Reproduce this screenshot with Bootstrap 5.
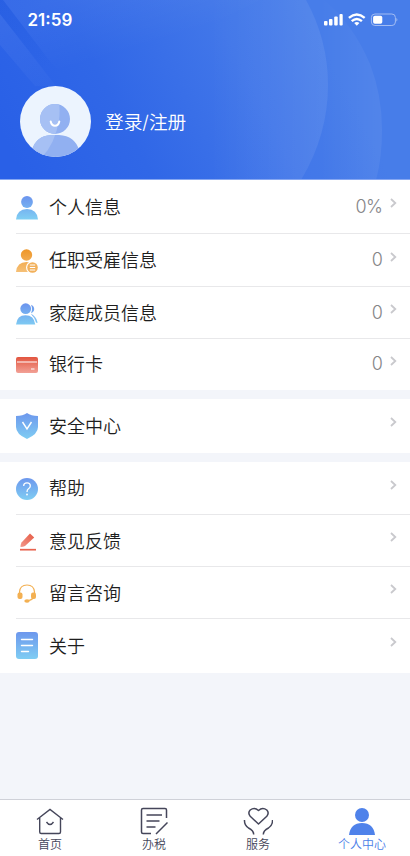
<!DOCTYPE html>
<html lang="zh-CN">
<head>
<meta charset="utf-8">
<meta name="viewport" content="width=device-width, initial-scale=1">
<title>个人中心</title>
<link href="https://cdn.jsdelivr.net/npm/bootstrap@5.3.0/dist/css/bootstrap.min.css" rel="stylesheet">
<style>
body{background:#f3f5fa;font-family:Inter,"Noto Sans CJK SC",sans-serif;color:#1e1e1e;height:856px;overflow:hidden}
svg{display:block;flex:none}
.hero{height:180px;background:#346be8;border-bottom:1px solid #86a7f2}
.status-bar{height:40px;padding:0 12px 0 27.5px}
.clock{font-size:17px;font-weight:600;line-height:40px}
.profile{padding:46px 20px 0;gap:14px}
.login-text{font-size:18.7px;line-height:26px;font-weight:350;padding-top:2px}
.group{margin-bottom:9px;background:#fff}
.entry{margin-left:16px;height:52px;border-bottom:1px solid #e8e8ea}
.entry:last-child{border-bottom-color:#fff}
.entry-body{padding-right:12.5px}
.h53{height:53px}.h54{height:54px}.h51{height:51px}
.icon-box{width:22px;margin-right:11px}
.drop-1{padding-top:2px}
.label-text{font-size:18px;line-height:26px;font-weight:350;padding-top:2px}
.value-text{font-size:18px;line-height:26px;color:#858587;font-weight:300;letter-spacing:-.8px;margin-right:7.500px}
.chev{margin-bottom:7px}
.tabs{height:57px;background:#fff;border-top:1px solid #cfd1d8}
.tab-item{font-size:12px;line-height:16px;color:#45465a;font-weight:350;padding-top:7px;width:104px;flex:none}
.tab-item:first-child{margin-left:-2px}
.tab-item.on{color:#4a7de8}
</style>
<script src="https://cdn.jsdelivr.net/npm/bootstrap@5.3.0/dist/js/bootstrap.bundle.min.js"></script>
</head>
<body class="d-flex flex-column">
<svg width="0" height="0" class="position-absolute"><defs>
<linearGradient id="blue" x1="0" y1="0" x2="0" y2="1"><stop stop-color="#6d97ed"/><stop offset="1" stop-color="#7fcdf3"/></linearGradient>
<linearGradient id="blueU" gradientUnits="userSpaceOnUse" x1="0" y1="0" x2="0" y2="24"><stop stop-color="#6b93ee"/><stop offset="1" stop-color="#80d0f3"/></linearGradient>
<linearGradient id="orangeU" gradientUnits="userSpaceOnUse" x1="0" y1="0" x2="0" y2="24"><stop stop-color="#ee9526"/><stop offset="1" stop-color="#f6c27a"/></linearGradient>
<linearGradient id="red" x1="0" y1="0" x2="0" y2="1"><stop stop-color="#e2553f"/><stop offset="1" stop-color="#f2a196"/></linearGradient>
<linearGradient id="redP" x1="1" y1="0" x2="0" y2="1"><stop stop-color="#e65a44"/><stop offset="1" stop-color="#f2988b"/></linearGradient>
</defs></svg>

<header class="hero position-relative text-white overflow-hidden">
<svg class="position-absolute top-0 start-0" width="410" height="180" viewBox="0 0 410 180"><defs>
<linearGradient id="bg" gradientUnits="userSpaceOnUse" x1="20" y1="170" x2="310" y2="20"><stop stop-color="#2960e7"/><stop offset=".35" stop-color="#3067e7"/><stop offset=".75" stop-color="#4277e9"/><stop offset="1" stop-color="#477de9"/></linearGradient>
<linearGradient id="arcA" gradientUnits="userSpaceOnUse" x1="210" y1="0" x2="328" y2="0"><stop stop-color="#fff" stop-opacity="0"/><stop offset="1" stop-color="#fff" stop-opacity=".08"/></linearGradient>
<linearGradient id="arcB" gradientUnits="userSpaceOnUse" x1="320" y1="0" x2="382" y2="0"><stop stop-color="#fff" stop-opacity="0"/><stop offset="1" stop-color="#fff" stop-opacity=".06"/></linearGradient>
<linearGradient id="top" gradientUnits="userSpaceOnUse" x1="60" y1="0" x2="80" y2="66"><stop stop-color="#fff" stop-opacity=".05"/><stop offset="1" stop-color="#fff" stop-opacity="0"/></linearGradient>
<linearGradient id="band" gradientUnits="userSpaceOnUse" x1="0" y1="10" x2="50" y2="85"><stop stop-color="#fff" stop-opacity=".06"/><stop offset="1" stop-color="#fff" stop-opacity=".02"/></linearGradient>
<linearGradient id="slit" gradientUnits="userSpaceOnUse" x1="0" y1="0" x2="50" y2="66"><stop stop-color="#1d55d8" stop-opacity=".25"/><stop offset="1" stop-color="#1d55d8" stop-opacity="0"/></linearGradient></defs>
<rect width="410" height="180" fill="url(#bg)"/>
<path d="M3 0H260L80 90L52 64z" fill="url(#top)"/>
<path d="M0 14L56 86H35L0 45z" fill="url(#band)"/>
<path d="M0 0H3L52 64L46 72L0 14z" fill="url(#slit)"/>
<path d="M200 0H306Q328 40 328 85Q328 135 301 180H200z" fill="url(#arcA)"/>
<path d="M324 0Q353 24 370 64Q382 95 382 130Q382 158 376 180H301Q328 135 328 85Q328 40 306 0z" fill="url(#arcB)"/>
</svg>
<div class="position-relative">
<div class="status-bar d-flex align-items-center justify-content-between">
<span class="clock">21:59</span>
<svg width="76" height="14" viewBox="0 0 76 14" fill="#fff">
<rect x="2" y="8" width="3.500" height="4.500" rx="1"/><rect x="7" y="6" width="3.500" height="6.500" rx="1"/><rect x="12.200" y="3.500" width="3.500" height="9" rx="1"/><rect x="17.500" y="1" width="3.200" height="11.500" rx="1"/>
<g fill="none" stroke="#fff" stroke-width="2.400"><path d="M26.900 4.900Q34.800-1.700 42.700 4.900"/><path d="M29.700 8.100Q34.800 3.700 39.900 8.100"/></g><path d="M32.200 10Q34.800 8 37.400 10L34.800 12.700z"/>
<rect x="49.400" y="1" width="24" height="11.500" rx="3.500" fill="none" stroke="#a2bcf3"/><rect x="51.100" y="2.800" width="9.200" height="8" rx="1.800"/><path d="M74.400 5Q76.400 6.700 74.400 8.500z" fill="#a2bcf3"/></svg>
</div>
<div class="profile d-flex align-items-center">
<svg width="71" height="71" viewBox="0 0 71 71"><defs><clipPath id="disc"><circle cx="35.500" cy="35.500" r="35.500"/></clipPath><clipPath id="figure"><circle cx="35" cy="33" r="15"/><path d="M12 71V64Q16 50 31 49H39Q55 50 59 64V71z"/></clipPath></defs>
<circle cx="35.500" cy="35.500" r="35.500" fill="#ecf4fe"/><g clip-path="url(#disc)"><g clip-path="url(#figure)"><path d="M0 0H71V71H0z" fill="#91b0f1"/><path d="M0 0H36Q41 20 39 34Q35 58 22 71H0z" fill="#a6c0f4"/></g></g><path d="M30.700 35.500Q31.500 39.700 35 39.700Q38.500 39.700 39.300 35.500" fill="none" stroke="#fff" stroke-width="2" stroke-linecap="round"/></svg>
<span class="login-text">登录/注册</span>
</div>
</div>
</header>

<main class="flex-grow-1">
<section class="group">
<div class="entry h54 d-flex align-items-center"><div class="icon-box drop-1"><svg width="22" height="24" viewBox="0 0 22 24" fill="url(#blueU)"><circle cx="11" cy="6" r="5.900"/><path d="M0 23.500Q1 13 11 13T22 23.500z"/></svg></div><div class="entry-body flex-grow-1 d-flex align-items-center"><span class="label-text me-auto">个人信息</span><span class="value-text">0%</span><svg class="chev" width="8" height="10" viewBox="0 0 8 10"><path d="M1 1L5.300 5L1 9" fill="none" stroke="#c9c9cd" stroke-width="1.800"/></svg></div></div>
<div class="entry h53 d-flex align-items-center"><div class="icon-box drop-1"><svg width="22" height="24" viewBox="0 0 22 24"><g fill="url(#orangeU)"><circle cx="10.500" cy="6" r="5.700"/><path d="M0 23Q1 13 10.500 13T21 23z"/></g><circle cx="16.500" cy="18.500" r="6.500" fill="#fff"/><circle cx="16.500" cy="18.500" r="5.300" fill="#f2b05a"/><path d="M13.800 16H19.200M13.800 18.500H19.200M13.800 21H19.200" stroke="#fff"/></svg></div><div class="entry-body flex-grow-1 d-flex align-items-center"><span class="label-text me-auto">任职受雇信息</span><span class="value-text">0</span><svg class="chev" width="8" height="10" viewBox="0 0 8 10"><path d="M1 1L5.300 5L1 9" fill="none" stroke="#c9c9cd" stroke-width="1.800"/></svg></div></div>
<div class="entry d-flex align-items-center"><div class="icon-box drop-1"><svg width="22" height="22" viewBox="0 0 22 22" fill="url(#blueU)"><circle cx="9.700" cy="5.700" r="5.400"/><path d="M0 21.500Q1 12.300 9.500 12.300T19.300 21.500z"/><path d="M15 1.800Q18.200 3.200 18.200 6Q18.200 9 15 10.200Q17 6 15 1.800z"/><path d="M15.500 11.300Q20.300 14 21.300 19.500H20.300Q19 14.500 15.500 11.300z" stroke="url(#blueU)" stroke-width=".5"/></svg></div><div class="entry-body flex-grow-1 d-flex align-items-center"><span class="label-text me-auto">家庭成员信息</span><span class="value-text">0</span><svg class="chev" width="8" height="10" viewBox="0 0 8 10"><path d="M1 1L5.300 5L1 9" fill="none" stroke="#c9c9cd" stroke-width="1.800"/></svg></div></div>
<div class="entry h51 d-flex align-items-center"><div class="icon-box drop-1"><svg width="22" height="16" viewBox="0 0 22 16"><rect width="22" height="16" rx="2" fill="url(#red)"/><path d="M1 5H21M15 12H18.500" stroke="#fff" stroke-width="1.200"/></svg></div><div class="entry-body flex-grow-1 d-flex align-items-center"><span class="label-text me-auto">银行卡</span><span class="value-text">0</span><svg class="chev" width="8" height="10" viewBox="0 0 8 10"><path d="M1 1L5.300 5L1 9" fill="none" stroke="#c9c9cd" stroke-width="1.800"/></svg></div></div>
</section>
<section class="group">
<div class="entry h54 d-flex align-items-center"><div class="icon-box"><svg width="22" height="26" viewBox="0 0 22 26"><path d="M11 0Q15 3 22 3V14Q22 21 11 26Q0 21 0 14V3Q7 3 11 0z" fill="url(#blue)"/><path d="M6.500 9L11 16L15.500 9" fill="none" stroke="#fff" stroke-width="1.400"/></svg></div><div class="entry-body flex-grow-1 d-flex align-items-center"><span class="label-text me-auto">安全中心</span><svg class="chev" width="8" height="10" viewBox="0 0 8 10"><path d="M1 1L5.300 5L1 9" fill="none" stroke="#c9c9cd" stroke-width="1.800"/></svg></div></div>
</section>
<section class="group">
<div class="entry h53 d-flex align-items-center"><div class="icon-box drop-1"><svg width="22" height="22" viewBox="0 0 22 22"><circle cx="11" cy="11" r="11" fill="url(#blue)"/><path d="M7.700 8Q7.700 4.900 11 4.900Q14.300 4.900 14.300 8Q14.300 9.700 12.500 10.700Q11 11.600 11 14" fill="none" stroke="#fff" stroke-width="1.300"/><circle cx="11" cy="16.500" r=".9" fill="#fff"/></svg></div><div class="entry-body flex-grow-1 d-flex align-items-center"><span class="label-text me-auto">帮助</span><svg class="chev" width="8" height="10" viewBox="0 0 8 10"><path d="M1 1L5.300 5L1 9" fill="none" stroke="#c9c9cd" stroke-width="1.800"/></svg></div></div>
<div class="entry d-flex align-items-center"><div class="icon-box drop-1"><svg width="22" height="18" viewBox="0 0 22 18"><path d="M14 .5L18.200 4.500L9 13Q7 14 4.500 14Q4.500 11.500 5.500 9.500z" fill="url(#redP)"/><path d="M4 16.700H20" stroke="#e8634f" stroke-width="1.700"/></svg></div><div class="entry-body flex-grow-1 d-flex align-items-center"><span class="label-text me-auto">意见反馈</span><svg class="chev" width="8" height="10" viewBox="0 0 8 10"><path d="M1 1L5.300 5L1 9" fill="none" stroke="#c9c9cd" stroke-width="1.800"/></svg></div></div>
<div class="entry d-flex align-items-center"><div class="icon-box drop-1"><svg width="22" height="19" viewBox="0 0 22 19"><path d="M3.500 10V8Q4 1 11 1T18.500 8V10M17.500 13Q16.500 16 12 16.500" fill="none" stroke="#f3b052" stroke-width="1.200"/><g fill="#f3b052"><rect x="1.500" y="8.500" width="5" height="6.500" rx="2"/><rect x="15" y="8.500" width="5" height="6.500" rx="2"/><ellipse cx="11" cy="17" rx="2.700" ry="1.800"/></g></svg></div><div class="entry-body flex-grow-1 d-flex align-items-center"><span class="label-text me-auto">留言咨询</span><svg class="chev" width="8" height="10" viewBox="0 0 8 10"><path d="M1 1L5.300 5L1 9" fill="none" stroke="#c9c9cd" stroke-width="1.800"/></svg></div></div>
<div class="entry h54 d-flex align-items-center"><div class="icon-box"><svg width="22" height="27" viewBox="0 0 22 27"><rect width="22" height="27" rx="3" fill="url(#blue)"/><path d="M5.500 7.500H16.500M5.500 13.500H16.500M5.500 19.500H12.500" stroke="#fff" stroke-width="1.400" stroke-linecap="round"/></svg></div><div class="entry-body flex-grow-1 d-flex align-items-center"><span class="label-text me-auto">关于</span><svg class="chev" width="8" height="10" viewBox="0 0 8 10"><path d="M1 1L5.300 5L1 9" fill="none" stroke="#c9c9cd" stroke-width="1.800"/></svg></div></div>
</section>
</main>

<nav class="tabs d-flex overflow-hidden">
<div class="tab-item d-flex flex-column align-items-center"><svg width="28" height="30" viewBox="0 0 28 30" fill="none" stroke="#45465a" stroke-width="1.400"><path d="M1 12.500L14 2.500L27 12.500M3.700 11V25Q3.700 26.500 5.200 26.500H23Q24.500 26.500 24.500 25V11M10.500 15Q14 20 17.500 15"/></svg><span>首页</span></div>
<div class="tab-item d-flex flex-column align-items-center"><svg width="28" height="30" viewBox="0 0 28 30" fill="none" stroke="#45465a" stroke-width="1.500"><path d="M11 26.500H3Q1.500 26.500 1.500 25V3Q1.500 1.500 3 1.500H25Q26.500 1.500 26.500 3V11M6.500 8H22M6.500 14H19.500M6.500 20H15.500M16 27L27.500 15.500"/></svg><span>办税</span></div>
<div class="tab-item d-flex flex-column align-items-center"><svg width="30" height="30" viewBox="-1 0 30 30" fill="none" stroke="#45465a" stroke-width="1.500" stroke-linejoin="round"><path d="M14.500 17L6.200 9.300Q3.500 6 6.200 3Q10.500-.3 14.500 3.500Q18.500-.3 22.800 3Q25.500 6 22.800 9.300zM.5 13Q.2 18 4.500 21Q9.700 23.500 9.700 27.500M28.500 13Q28.800 18 24.500 21Q19.300 23.500 19.300 27.500"/></svg><span>服务</span></div>
<div class="tab-item on d-flex flex-column align-items-center"><svg width="26" height="30" viewBox="0 0 26 30" fill="#4f82ea"><circle cx="13" cy="8" r="7"/><path d="M0 28Q1.500 16 13 16T26 28z"/></svg><span>个人中心</span></div>
</nav>
</body>
</html>
